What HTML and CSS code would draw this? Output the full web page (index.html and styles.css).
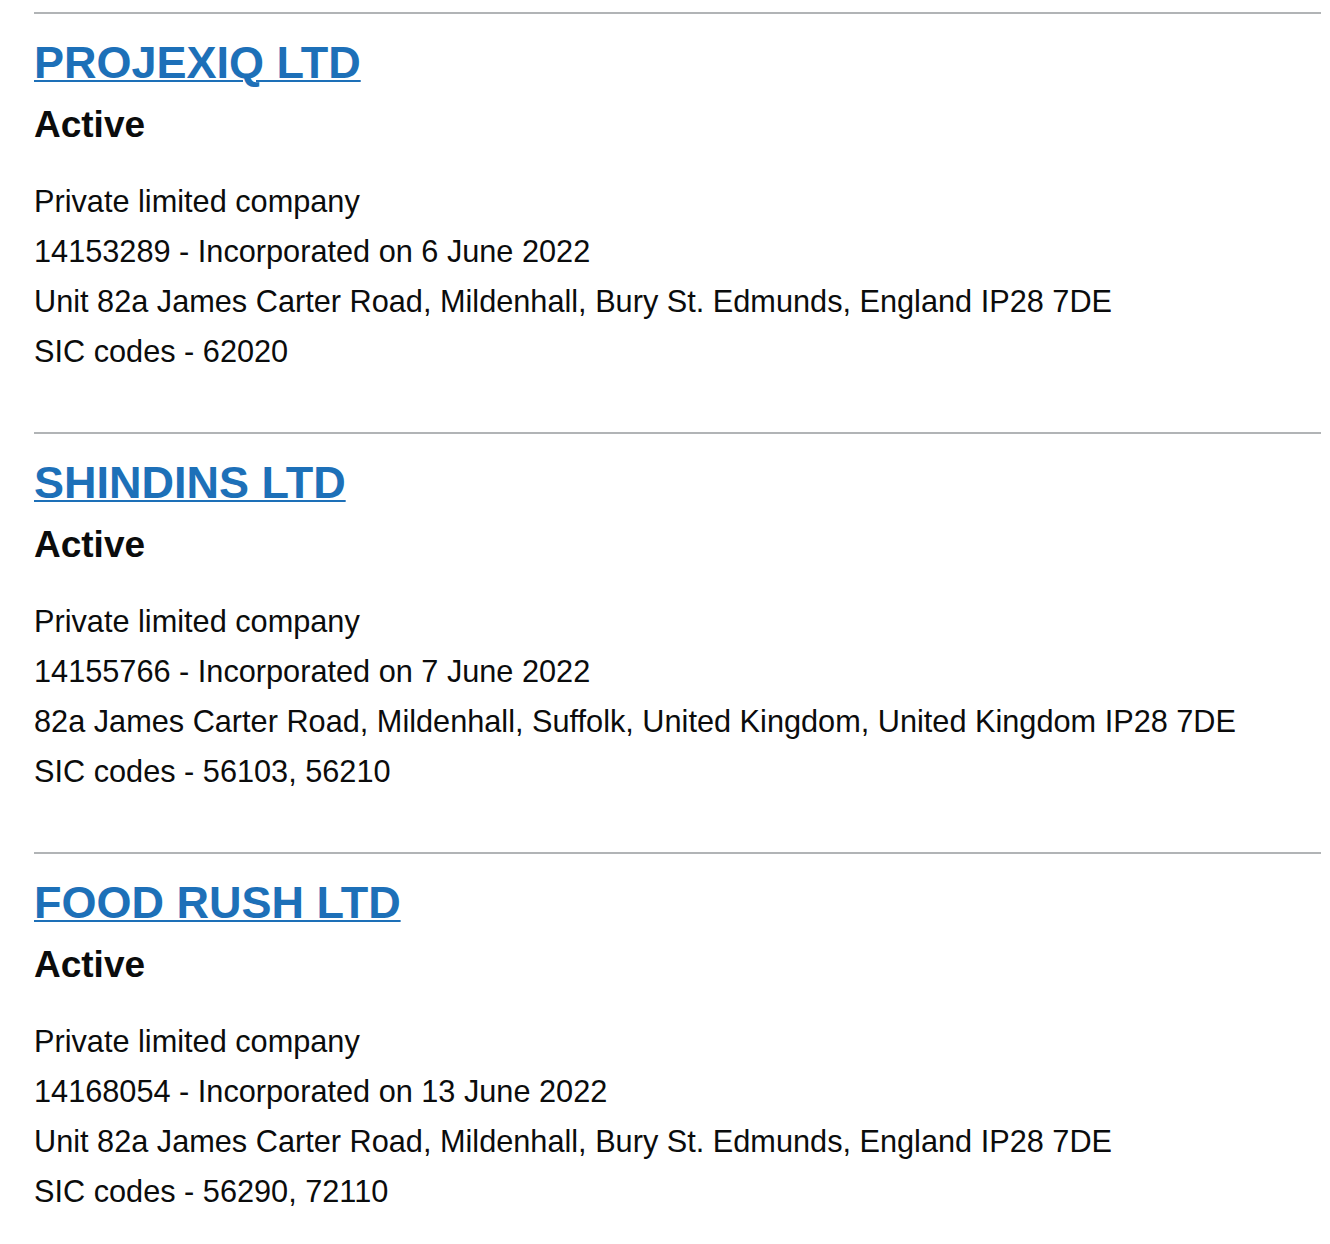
FILE: index.html
```html
<!DOCTYPE html>
<html lang="en">
<head>
<meta charset="utf-8">
<title>Companies</title>
<link rel="stylesheet" href="styles.css">
</head>
<body>
<ul class="results">
  <li class="result">
    <h2 class="result-title"><a href="#" class="result-link">PROJEXIQ LTD</a></h2>
    <p class="result-status">Active</p>
    <ul class="result-meta">
      <li>Private limited company</li>
      <li>14153289 - Incorporated on 6 June 2022</li>
      <li>Unit 82a James Carter Road, Mildenhall, Bury St. Edmunds, England IP28 7DE</li>
      <li>SIC codes - 62020</li>
    </ul>
  </li>
  <li class="result">
    <h2 class="result-title"><a href="#" class="result-link">SHINDINS LTD</a></h2>
    <p class="result-status">Active</p>
    <ul class="result-meta">
      <li>Private limited company</li>
      <li>14155766 - Incorporated on 7 June 2022</li>
      <li>82a James Carter Road, Mildenhall, Suffolk, United Kingdom, United Kingdom IP28 7DE</li>
      <li>SIC codes - 56103, 56210</li>
    </ul>
  </li>
  <li class="result">
    <h2 class="result-title"><a href="#" class="result-link">FOOD RUSH LTD</a></h2>
    <p class="result-status">Active</p>
    <ul class="result-meta">
      <li>Private limited company</li>
      <li>14168054 - Incorporated on 13 June 2022</li>
      <li>Unit 82a James Carter Road, Mildenhall, Bury St. Edmunds, England IP28 7DE</li>
      <li>SIC codes - 56290, 72110</li>
    </ul>
  </li>
</ul>
</body>
</html>
```

FILE: styles.css
```css
html, body {
  margin: 0;
  padding: 0;
  background: #ffffff;
}

body {
  font-family: "Liberation Sans", Arial, sans-serif;
  color: #0b0c0c;
}

.results {
  list-style: none;
  margin: 0;
  padding: 12px 0 0 34px;
  width: 1287px;
}

.result {
  border-top: 2px solid #b1b4b6;
  padding: 24px 0 55px 0;
}

.result-title {
  margin: 0;
  font-size: 45px;
  line-height: 50px;
  font-weight: 700;
}

.result-link {
  color: #1d70b8;
  text-decoration: underline;
  text-decoration-thickness: 2px;
  text-underline-offset: 2px;
}

.result-status {
  margin: 15px 0 0 0;
  font-size: 37px;
  line-height: 44px;
  font-weight: 700;
}

.result-meta {
  list-style: none;
  margin: 30px 0 0 0;
  padding: 0;
  font-size: 30.7px;
  line-height: 50px;
}
```
